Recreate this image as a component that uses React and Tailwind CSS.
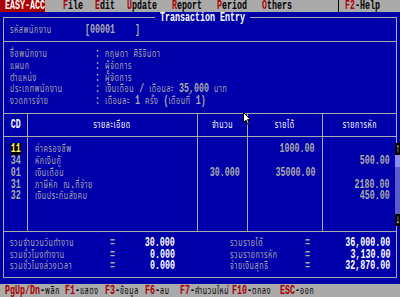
import React from "react";

function splitThai(text) {
  if (typeof text !== "string") return text;
  const parts = text.split(/([\u0E00-\u0E7F]+)/);
  return parts.map((p, i) =>
    /[\u0E00-\u0E7F]/.test(p) ? (
      <span key={i} className="text-[11px] font-normal tracking-[1px]">{p}</span>
    ) : (
      p
    )
  );
}

function T({ children, o = "origin-left", className = "" }) {
  return (
    <span className={`inline-block whitespace-pre scale-x-[0.641] ${o} ${className}`}>
      {splitThai(children)}
    </span>
  );
}

function K({ k, d, dc = "" }) {
  return (
    <T>
      <span className="text-[#aa0000]">{k}</span>-<span className={`text-[11px] font-normal tracking-[1px] ${dc}`}>{d}</span>
    </T>
  );
}

const info = [
  ["ชื่อพนักงาน", "กฤษดา ศิริจินดา"],
  ["แผนก", "ผู้จัดการ"],
  ["ตำแหน่ง", "ผู้จัดการ"],
  ["ประเภทพนักงาน", "เงินเดือน / เดือนละ 35,000 บาท"],
  ["งวดการจ่าย", "เดือนละ 1 ครั้ง (เดือนที่ 1)"],
];

const rows = [
  ["11", "ค่าครองชีพ", "", "1000.00", ""],
  ["34", "หักเงินกู้", "", "", "500.00"],
  ["01", "เงินเดือน", "30.000", "35000.00", ""],
  ["31", "ภาษีหัก ณ.ที่จ่าย", "", "", "2180.00"],
  ["32", "เงินประกันสังคม", "", "", "450.00"],
];

const sums = [
  ["รวมจำนวนวันทำงาน", "30.000", "รวมรายได้", "36,000.00"],
  ["รวมชั่วโมงทำงาน", "0.000", "รวมรายการหัก", "3,130.00"],
  ["รวมชั่วโมงล่วงเวลา", "0.000", "จ่ายเงินสุทธิ", "32,870.00"],
];

export default function App() {
  return (
    <div className="relative h-[297px] w-[400px] overflow-hidden bg-[#0000aa] font-['Liberation_Mono','Noto_Sans_Thai','Loma','Garuda','DejaVu_Sans_Mono','Noto_Sans',monospace] text-[13px] font-bold leading-[12px] text-[#aaaaaa]">
      {/* Menu bar */}
      <div className="flex h-[12px] bg-[#aaaaaa] text-black">
        <div className="flex w-[45px] items-center bg-[#aa0000] pl-[5px] text-white">
          <T>EASY-ACC</T>
        </div>
        <div className="w-[20px]" />
        <div className="flex w-[35px] items-center">
          <T><span className="text-[#aa0000]">F</span>ile</T>
        </div>
        <div className="flex w-[35px] items-center">
          <T><span className="text-[#aa0000]">E</span>dit</T>
        </div>
        <div className="flex w-[45px] items-center">
          <T><span className="text-[#aa0000]">U</span>pdate</T>
        </div>
        <div className="flex w-[45px] items-center">
          <T><span className="text-[#aa0000]">R</span>eport</T>
        </div>
        <div className="flex w-[45px] items-center">
          <T><span className="text-[#aa0000]">P</span>eriod</T>
        </div>
        <div className="flex w-[82px] items-center">
          <T><span className="text-[#aa0000]">O</span>thers</T>
        </div>
        <div className="w-[2px] bg-black" />
        <div className="flex items-center pl-[6px]">
          <T><span className="text-[#aa0000]">F2</span>-Help</T>
        </div>
      </div>

      {/* Frame */}
      <div className="relative ml-[3px] mt-[5px] h-[261px] w-[394px] border border-[#aaaaaa]">
        <div className="absolute left-[151px] top-[-6px] flex h-[12px] w-[95px] items-center bg-[#0000aa] pl-[5px] text-white">
          <T>Transaction Entry</T>
        </div>

        {/* Employee code */}
        <div className="flex h-[24px] items-center border-b border-[#aaaaaa] pl-[6px]">
          <div className="w-[75px]"><T>รหัสพนักงาน</T></div>
          <T>[00001    ]</T>
        </div>

        {/* Employee info */}
        <div className="flex h-[72px] flex-col justify-center border-b border-[#aaaaaa] pl-[6px]">
          {info.map(([l, v]) => (
            <div key={l} className="flex h-[11.88px] items-center">
              <div className="w-[85px]"><T>{l}</T></div>
              <div className="w-[10px]"><T>:</T></div>
              <T>{v}</T>
            </div>
          ))}
        </div>

        {/* Table */}
        <div className="flex h-[118px] border-b border-[#aaaaaa]">
          <div className="flex w-[24px] flex-col border-r border-[#aaaaaa]">
            <div className="flex h-[23px] shrink-0 items-center justify-center border-b border-[#aaaaaa] text-white">
              <T o="origin-center">CD</T>
            </div>
            <div className="pt-[6px]">
              {rows.map((r, i) => (
                <div key={i} className="flex h-[11.88px] items-center justify-center">
                  {i === 0 ? (
                    <T o="origin-center" className="bg-black text-[#ffff55]">{r[0]}</T>
                  ) : (
                    <T o="origin-center">{r[0]}</T>
                  )}
                </div>
              ))}
            </div>
          </div>
          <div className="flex w-[170px] flex-col border-r border-[#aaaaaa]">
            <div className="flex h-[23px] shrink-0 items-center justify-center border-b border-[#aaaaaa] text-white">
              <T o="origin-center">รายละเอียด</T>
            </div>
            <div className="pl-[7px] pt-[6px]">
              {rows.map((r, i) => (
                <div key={i} className="flex h-[11.88px] items-center">
                  <T>{r[1]}</T>
                </div>
              ))}
            </div>
          </div>
          <div className="flex w-[50px] flex-col border-r border-[#aaaaaa]">
            <div className="flex h-[23px] shrink-0 items-center justify-center border-b border-[#aaaaaa] text-white">
              <T o="origin-center">จำนวน</T>
            </div>
            <div className="pr-[7px] pt-[6px]">
              {rows.map((r, i) => (
                <div key={i} className="flex h-[11.88px] items-center justify-end">
                  <T o="origin-right">{r[2]}</T>
                </div>
              ))}
            </div>
          </div>
          <div className="flex w-[75px] flex-col border-r border-[#aaaaaa]">
            <div className="flex h-[23px] shrink-0 items-center justify-center border-b border-[#aaaaaa] text-white">
              <T o="origin-center">รายได้</T>
            </div>
            <div className="pr-[7px] pt-[6px]">
              {rows.map((r, i) => (
                <div key={i} className="flex h-[11.88px] items-center justify-end">
                  <T o="origin-right">{r[3]}</T>
                </div>
              ))}
            </div>
          </div>
          <div className="flex w-[73px] flex-col">
            <div className="flex h-[23px] shrink-0 items-center justify-center border-b border-[#aaaaaa] text-white">
              <T o="origin-center">รายการหัก</T>
            </div>
            <div className="pr-[6px] pt-[6px]">
              {rows.map((r, i) => (
                <div key={i} className="flex h-[11.88px] items-center justify-end">
                  <T o="origin-right">{r[4]}</T>
                </div>
              ))}
            </div>
          </div>
        </div>

        {/* Summary */}
        <div className="flex h-[45px] flex-col justify-center pl-[6px]">
          {sums.map((s) => (
            <div key={s[0]} className="flex h-[11.88px] items-center">
              <div className="w-[100px]"><T>{s[0]}</T></div>
              <div className="w-[10px]"><T>=</T></div>
              <div className="w-[55px] text-right text-white"><T o="origin-right">{s[1]}</T></div>
              <div className="w-[55px]" />
              <div className="w-[75px]"><T>{s[2]}</T></div>
              <div className="w-[10px]"><T>=</T></div>
              <div className="w-[75px] text-right text-white"><T o="origin-right">{s[3]}</T></div>
            </div>
          ))}
        </div>

        {/* Scrollbar */}
        <div className="absolute left-[391px] top-[125px] flex w-[5px] flex-col">
          <div className="flex h-[12px] items-center justify-center bg-black text-white">
            <T o="origin-center">↑</T>
          </div>
          <div className="h-[12px] bg-[#8c8cf0]" />
          <div className="h-[47px] bg-[#5a5ac8]" />
          <div className="flex h-[12px] items-center justify-center bg-black text-white">
            <T o="origin-center">↓</T>
          </div>
        </div>
      </div>

      {/* Mouse cursor */}
      <svg className="absolute left-[243px] top-[112px]" width="8" height="13" viewBox="0 0 8 13">
        <path d="M0.5 0.5 L0.5 10.5 L3 8.2 L4.6 12.2 L6.2 11.5 L4.6 7.6 L7.6 7.6 Z" fill="white" stroke="black" strokeWidth="1" />
      </svg>

      {/* Status bar */}
      <div className="mt-[6px] flex h-[13px] items-center bg-[#aaaaaa] pl-[5px] text-black">
        <div className="w-[60px]"><K k="PgUp/Dn" d="พลิก" /></div>
        <div className="w-[40px]"><K k="F1" d="แสดง" /></div>
        <div className="w-[40px]"><K k="F3" d="ข้อมูล" /></div>
        <div className="w-[35px]"><K k="F6" d="ลบ" /></div>
        <div className="w-[52px]"><K k="F7" d="คำนวนใหม่" /></div>
        <div className="w-[48px]"><K k="F10" d="ตกลง" /></div>
        <div><K k="ESC" d="ออก" /></div>
      </div>
    </div>
  );
}
